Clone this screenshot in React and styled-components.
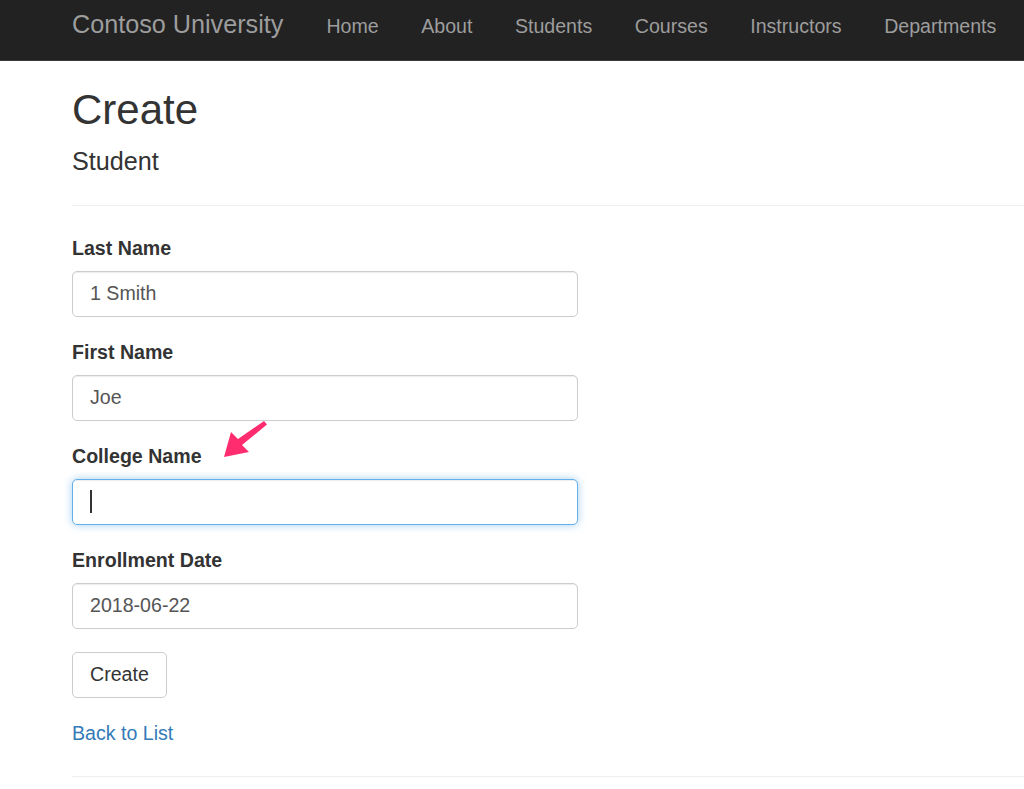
import React from 'react';
import styled, { createGlobalStyle } from 'styled-components';

const GlobalStyle = createGlobalStyle`
  html, body {
    margin: 0;
    padding: 0;
    background: #fff;
  }
  body {
    font-family: "Liberation Sans", Arial, Helvetica, sans-serif;
    font-size: 19.6px;
    line-height: 28px;
    color: #333;
    overflow: hidden;
  }
  * {
    box-sizing: border-box;
  }
`;

const navItems = ['Home', 'About', 'Students', 'Courses', 'Instructors', 'Departments'];

const fields = [
  { label: 'Last Name', value: '1 Smith' },
  { label: 'First Name', value: 'Joe' },
  { label: 'College Name', value: '', focused: true, note: true },
  { label: 'Enrollment Date', value: '2018-06-22' },
];

const Arrow = () => (
  <ArrowSvg width="48" height="40" viewBox="0 0 48 40">
    <polygon
      points="2,37 9,12 16,19 42,1 45,4.5 20,25 27,32"
      fill="#ff2d6f"
    />
  </ArrowSvg>
);

const App = () => (
  <>
    <GlobalStyle />
    <Navbar>
      <NavInner>
        <Brand href="#">Contoso University</Brand>
        <NavList>
          {navItems.map((item) => (
            <NavLink key={item} href="#">
              {item}
            </NavLink>
          ))}
        </NavList>
      </NavInner>
    </Navbar>
    <Main>
      <Title>Create</Title>
      <Subtitle>Student</Subtitle>
      <Rule $top={29} $bottom={28} />
      <Form onSubmit={(e) => e.preventDefault()}>
        {fields.map((f) => (
          <FormGroup key={f.label}>
            <LabelRow>
              <Label>{f.label}</Label>
              {f.note && <Arrow />}
            </LabelRow>
            <InputWrap>
              <Input type="text" defaultValue={f.value} $focused={f.focused} readOnly />
              {f.focused && <Caret />}
            </InputWrap>
          </FormGroup>
        ))}
        <FormGroup $top={2}>
          <Button type="submit">Create</Button>
        </FormGroup>
      </Form>
      <BackLink href="#">Back to List</BackLink>
      <Rule $top={29} $bottom={0} />
    </Main>
  </>
);

export default App;

const Navbar = styled.header`
  height: 61px;
  background: #222;
  border-bottom: 1px solid #3a3a3a;
`;

const NavInner = styled.nav`
  display: flex;
  align-items: baseline;
  padding: 10px 0 0 72px;
`;

const Brand = styled.a`
  font-size: 25.2px;
  line-height: 28px;
  color: #9d9d9d;
  text-decoration: none;
  margin-right: 43px;
  white-space: nowrap;
`;

const NavList = styled.div`
  display: flex;
  align-items: baseline;
  gap: 42.5px;
`;

const NavLink = styled.a`
  font-size: 19.6px;
  line-height: 28px;
  color: #9d9d9d;
  text-decoration: none;
  white-space: nowrap;
`;

const Main = styled.main`
  padding-left: 72px;
`;

const Title = styled.h2`
  font-size: 42px;
  font-weight: 400;
  line-height: 46.2px;
  margin: 26px 0 0;
  color: #333;
`;

const Subtitle = styled.h4`
  font-size: 25.2px;
  font-weight: 400;
  line-height: 27.7px;
  margin: 15px 0 0;
  color: #333;
`;

const Rule = styled.hr`
  border: 0;
  border-top: 1px solid #eee;
  margin: ${(p) => p.$top}px 0 ${(p) => p.$bottom}px;
`;

const Form = styled.form`
  width: 506px;
`;

const FormGroup = styled.div`
  padding-top: ${(p) => p.$top || 0}px;
  margin-bottom: 21px;
`;

const LabelRow = styled.div`
  position: relative;
  margin-bottom: 9px;
`;

const Label = styled.label`
  display: inline-block;
  font-weight: 700;
  font-size: 19.6px;
  line-height: 28px;
  color: #333;
`;

const ArrowSvg = styled.svg`
  position: absolute;
  left: 150px;
  top: -22px;
`;

const InputWrap = styled.div`
  position: relative;
`;

const Input = styled.input`
  display: block;
  width: 100%;
  height: 46px;
  padding: 0 17px;
  font-family: inherit;
  font-size: 19.6px;
  color: #555;
  background: #fff;
  border: 1px solid ${(p) => (p.$focused ? '#66afe9' : '#ccc')};
  border-radius: 5px;
  outline: none;
  caret-color: transparent;
  box-shadow: ${(p) =>
    p.$focused
      ? 'inset 0 1px 1px rgba(0,0,0,.075), 0 0 8px rgba(102,175,233,.6)'
      : 'inset 0 1px 1px rgba(0,0,0,.075)'};
`;

const Caret = styled.span`
  position: absolute;
  left: 18px;
  top: 11px;
  width: 1.5px;
  height: 23px;
  background: #333;
`;

const Button = styled.button`
  height: 46px;
  padding: 0 17px;
  font-family: inherit;
  font-size: 19.6px;
  color: #333;
  background: #fff;
  border: 1px solid #ccc;
  border-radius: 5px;
  cursor: pointer;
`;

const BackLink = styled.a`
  display: block;
  width: max-content;
  font-size: 19.6px;
  line-height: 28px;
  color: #337ab7;
  text-decoration: none;
`;
